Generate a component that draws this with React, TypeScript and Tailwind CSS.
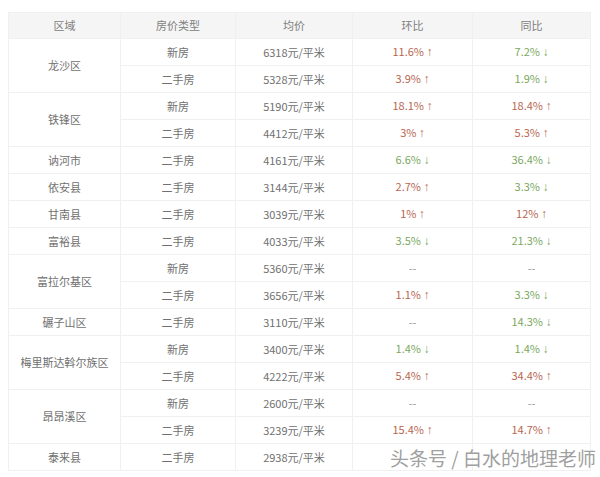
import React from 'react';

type Change = { v: string; dir: 'up' | 'down' | 'none' | 'hidden' };
type Row = {
  area?: string;
  span?: number;
  type: string;
  price: string;
  mom: Change;
  yoy: Change;
};

const up = (v: string): Change => ({ v, dir: 'up' });
const down = (v: string): Change => ({ v, dir: 'down' });
const none: Change = { v: '--', dir: 'none' };
const hidden: Change = { v: '', dir: 'hidden' };

const rows: Row[] = [
  { area: '龙沙区', span: 2, type: '新房', price: '6318', mom: up('11.6%'), yoy: down('7.2%') },
  { type: '二手房', price: '5328', mom: up('3.9%'), yoy: down('1.9%') },
  { area: '铁锋区', span: 2, type: '新房', price: '5190', mom: up('18.1%'), yoy: up('18.4%') },
  { type: '二手房', price: '4412', mom: up('3%'), yoy: up('5.3%') },
  { area: '讷河市', type: '二手房', price: '4161', mom: down('6.6%'), yoy: down('36.4%') },
  { area: '依安县', type: '二手房', price: '3144', mom: up('2.7%'), yoy: down('3.3%') },
  { area: '甘南县', type: '二手房', price: '3039', mom: up('1%'), yoy: up('12%') },
  { area: '富裕县', type: '二手房', price: '4033', mom: down('3.5%'), yoy: down('21.3%') },
  { area: '富拉尔基区', span: 2, type: '新房', price: '5360', mom: none, yoy: none },
  { type: '二手房', price: '3656', mom: up('1.1%'), yoy: down('3.3%') },
  { area: '碾子山区', type: '二手房', price: '3110', mom: none, yoy: down('14.3%') },
  { area: '梅里斯达斡尔族区', span: 2, type: '新房', price: '3400', mom: down('1.4%'), yoy: down('1.4%') },
  { type: '二手房', price: '4222', mom: up('5.4%'), yoy: up('34.4%') },
  { area: '昂昂溪区', span: 2, type: '新房', price: '2600', mom: none, yoy: none },
  { type: '二手房', price: '3239', mom: up('15.4%'), yoy: up('14.7%') },
  { area: '泰来县', type: '二手房', price: '2938', mom: hidden, yoy: hidden },
];

function ChangeCell({ c }: { c: Change }) {
  if (c.dir === 'hidden') return <span />;
  if (c.dir === 'none') return <span className="text-[#999]">--</span>;
  const arrow = (
    <span className="text-[12px]" style={{ fontFamily: '"Liberation Sans", sans-serif' }}>
      {c.dir === 'up' ? '↑' : '↓'}
    </span>
  );
  return (
    <span className={c.dir === 'up' ? 'text-[#b86650]' : 'text-[#7aa860]'}>
      {c.v} {arrow}
    </span>
  );
}

const cell = 'border border-[#f0f0f0] text-center align-middle p-0';

export default function App() {
  return (
    <div
      className="relative w-[600px] h-[477px] bg-white overflow-hidden"
      style={{ fontFamily: '"Noto Sans CJK SC", "Noto Sans", sans-serif' }}
    >
      <div className="pt-[12px] pl-[8px]">
        <table className="border-collapse table-fixed w-[582px] text-[11px] text-[#707070]">
          <colgroup>
            <col className="w-[112px]" />
            <col className="w-[115px]" />
            <col className="w-[117px]" />
            <col className="w-[120px]" />
            <col className="w-[118px]" />
          </colgroup>
          <thead>
            <tr className="h-[26px] bg-[#f5f5f5] text-[#808080]">
              <th className={`${cell} font-normal`}>区域</th>
              <th className={`${cell} font-normal`}>房价类型</th>
              <th className={`${cell} font-normal`}>均价</th>
              <th className={`${cell} font-normal`}>环比</th>
              <th className={`${cell} font-normal`}>同比</th>
            </tr>
          </thead>
          <tbody>
            {rows.map((r, i) => (
              <tr key={i} className="h-[27px]">
                {r.area && (
                  <td className={cell} rowSpan={r.span ?? 1}>
                    {r.area}
                  </td>
                )}
                <td className={cell}>{r.type}</td>
                <td className={cell}>{r.price}元/平米</td>
                <td className={cell}>
                  <ChangeCell c={r.mom} />
                </td>
                <td className={cell}>
                  <ChangeCell c={r.yoy} />
                </td>
              </tr>
            ))}
          </tbody>
        </table>
      </div>
      <div
        className="absolute left-[390px] top-[444px] text-[19px] leading-[28px] whitespace-nowrap text-[#a0a0a0]"
        style={{ textShadow: '0 0 2px #fff, 0 0 2px #fff' }}
      >
        头条号 / 白水的地理老师
      </div>
    </div>
  );
}
